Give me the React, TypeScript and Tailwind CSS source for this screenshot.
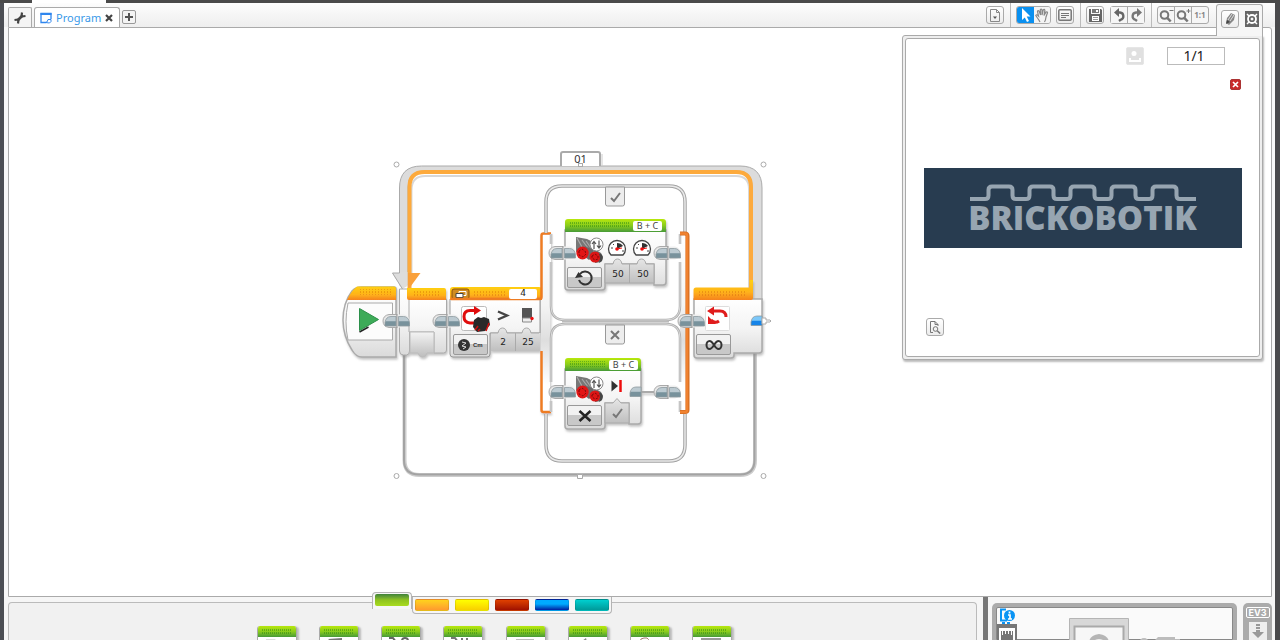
import React from 'react';
import clsx from 'clsx';

type Side = 'left' | 'right';

const toolButton =
  'flex h-[18px] w-[18px] items-center justify-center bg-linear-to-b from-white to-[#ececec] text-[#777]';
const singleTool = clsx(toolButton, 'rounded-[3px] border border-[#aaa]');

const categories = [
  { name: 'Flow', className: 'from-[#ffd21c] to-[#ff9a2e]' },
  { name: 'Sensor', className: 'from-[#ffff00] to-[#f8cf00]' },
  { name: 'Data', className: 'from-[#e04000] to-[#a01000]' },
  { name: 'Advanced', className: 'from-[#00aaff] from-40% to-[#0018a0]' },
  { name: 'My Blocks', className: 'from-[#00cfcf] to-[#009a9a]' },
];

const paletteBlocks = [
  'Medium Motor',
  'Large Motor',
  'Move Steering',
  'Move Tank',
  'Display',
  'Sound',
  'Brick Status Light',
  'Invert Motor',
];

const values = [
  { label: 'Mode threshold', value: '4', className: 'left-[174px] top-[144px] h-[10px] w-7 rounded-xs bg-white' },
  { label: 'Compare type', value: '2', className: 'left-[156px] top-[189px] h-4 w-6' },
  { label: 'Threshold', value: '25', className: 'left-[181px] top-[189px] h-4 w-6' },
  { label: 'Power left', value: '50', className: 'left-[271px] top-[121px] h-4 w-6' },
  { label: 'Power right', value: '50', className: 'left-[296px] top-[121px] h-4 w-6' },
];

const ports = [
  { label: 'Drive ports', className: 'left-[298px] top-[76px]' },
  { label: 'Stop ports', className: 'left-[274px] top-[215px]' },
];

const CategoryTabs: React.FC = () => (
  <div className="absolute inset-x-0 -top-[5px] flex items-start justify-center pr-[7px]">
    <div className="h-[17px] w-10 rounded-t-[4px] border border-b-0 border-[#b4b4b4] bg-[#f6f6f6] px-0.5 pt-px">
      <button
        aria-label="Action"
        className="block h-3 w-[34px] rounded-[2px] bg-linear-to-b from-[#3f8238] via-[#8fc31f] to-[#a9dc1f]"
      />
    </div>
    <div className="mt-[5px] flex h-[17px] gap-1.5 rounded-b-[4px] border border-t-0 border-[#b4b4b4] bg-[#f6f6f6] px-0.5 pt-0.5">
      {categories.map((category) => (
        <button
          key={category.name}
          aria-label={category.name}
          className={clsx('h-3 w-[34px] rounded-[2px] border border-black/10 bg-linear-to-b', category.className)}
        />
      ))}
    </div>
  </div>
);

const paletteIcons = [
  <path d="M8 3h9l3 4H8z" fill="#ddd" />,
  <path d="M8 3l14-1v2l-6 3h-3z" fill="#777" />,
  <path d="M7 2h4l3 4M20 5a3 3 0 0 1 6 0" fill="none" stroke="#666" strokeWidth="2" />,
  <path d="M7 2h4l3 4M18 2v4M23 2v4" fill="none" stroke="#777" strokeWidth="2" />,
  <path d="M9 3h18v4H9z" fill="#bbb" />,
  <path d="M13 5l4-3 1 4" fill="#888" />,
  <path d="M9 6q0-4 4-4h3q2 1 2 4" fill="none" stroke="#a87a6e" />,
  <path d="M9 6V3h18v4" fill="none" stroke="#999" strokeWidth="2" />,
];

const Palette: React.FC = () => (
  <div className="relative flex min-w-0 flex-1 flex-col pr-[6px] pt-[5px]">
    <div className="flex flex-1 justify-center rounded-t-[4px] border border-b-0 border-[#bbb] bg-[#f1f1f1] pl-1 pt-[23px]">
      <div className="flex w-[476px] justify-between">
        {paletteBlocks.map((name, i) => (
          <button
            key={name}
            aria-label={name}
            className="h-10 w-10 overflow-hidden rounded-t-[3px] border-x border-[#aaa] bg-white shadow-[2px_1px_2px_#bbb]"
          >
            <svg className="block h-full w-full" viewBox="0 0 38 40">
              <rect width="38" height="11" fill="url(#green)" />
              <rect x="4" y="3" width="30" height="5" fill="url(#greenStuds)" />
              <g transform="translate(0 10)">{paletteIcons[i]}</g>
            </svg>
          </button>
        ))}
      </div>
    </div>
    <CategoryTabs />
  </div>
);

const HardwarePanel: React.FC = () => (
  <div className="flex w-[289px] gap-1.5 border-l-[5px] border-[#777] pl-1 pt-1.5">
    <div className="flex w-[245px] rounded-t-[5px] bg-[#ababab] px-1 pt-1">
      <div className="flex flex-1 rounded-t-[2px] border border-[#888] bg-[#fafafa]">
        <div className="flex w-5 flex-col">
          <button aria-label="Brick information" className="flex h-5 items-center justify-center">
            <svg width="16" height="16" viewBox="0 0 16 16">
              <path d="M7 1.500H2v11h6" fill="none" stroke="#0a94f4" strokeWidth="2" />
              <path d="M3 15h3m2 0h3" stroke="#0a94f4" strokeWidth="2" />
              <circle cx="10.500" cy="7.500" r="5.500" fill="#0a94f4" />
              <path d="M10.500 3.500v2M9 7h2v4M9 11h4" fill="none" stroke="#fff" strokeWidth="1.700" />
            </svg>
          </button>
          <button aria-label="Port view" className="flex h-6 justify-center bg-[#777] pt-1">
            <svg width="16" height="18" viewBox="0 0 16 18">
              <path d="M0 0h16v18H0z" fill="#fff" />
              <path d="M2 3h1v4h1V3h2v3h1V3h2v3h1V3h2v4h1V3h1v15H2z" fill="#777" />
            </svg>
          </button>
        </div>
        <svg className="mt-[10px] ml-[52px]" width="120" height="30" viewBox="0 0 120 30">
          <path d="M.500.500h59V30H.500z" fill="#d8d8d8" stroke="#b5b5b5" />
          <path d="M5.500 8.500h49V30h-49z" fill="#f7f7f7" stroke="#aaa" strokeWidth="2" />
          <path d="M20 24q1-7 10-8 9 1 10 8z" fill="#b5b5b5" />
          <path d="M23 24q7-6 14 0z" fill="#eee" />
          <circle cx="75" cy="25" r="5" fill="#bcbcbc" />
          <path d="M84 24l5-5h17v2h5v4H84z" fill="#bcbcbc" />
        </svg>
      </div>
    </div>
    <div className="flex w-[29px] flex-col items-center gap-1 rounded-t-[5px] bg-[#ababab] pt-1">
      <span className="rounded-[2px] border border-white px-0.5 font-[Inter] text-[9px] leading-[9px] font-bold text-white">
        EV3
      </span>
      <button aria-label="Download" className="flex h-6 w-[18px] justify-center bg-[#eee] pt-0.5 text-[#999]">
        <svg width="12" height="14" viewBox="0 0 12 14" fill="currentColor">
          <path d="M4 0h4v2H4zM4 3h4v2H4zM4 6h4v2h4l-6 6-6-6h4z" />
        </svg>
      </button>
    </div>
  </div>
);

const ProjectTabs: React.FC = () => (
  <div className="flex items-end pl-1">
    <button
      aria-label="Project properties"
      className="flex h-5 w-6 items-center justify-center rounded-t-[2px] border border-b-0 border-[#aaa] bg-[#f4f4f4] text-[#444]"
    >
      <svg width="14" height="14" viewBox="0 0 14 14" fill="none" stroke="currentColor">
        <path d="M4.500 9.500l5-5" strokeWidth="2.600" />
        <path d="M9 1.500L8.500 5.500l4-.500M1.500 9l4-.500-.500 4" strokeWidth="2.200" />
      </svg>
    </button>
    <div className="-mb-px ml-0.5 flex h-[21px] w-[86px] items-center rounded-t-[3px] border border-b-0 border-[#aaa] bg-white pl-[5px]">
      <button className="flex items-center gap-1 font-['Noto_Sans'] text-[11px] leading-4 text-[#3999e8]">
        <svg width="12" height="12" viewBox="0 0 12 12" fill="none" stroke="#2f86ee">
          <path d="M6 10.500H1V1.500h10V7" strokeWidth="1.300" />
          <path d="M.500 2h11" strokeWidth="2" />
          <path d="M5.500 10.500q2 0 2.500-3h3v2l-1.500 1.500z" />
        </svg>
        Program
      </button>
      <button aria-label="Close tab" className="ml-1 text-[#444]">
        <svg width="8" height="8" viewBox="0 0 8 8" stroke="currentColor" strokeWidth="2.200">
          <path d="M1 1l6 6M7 1L1 7" />
        </svg>
      </button>
    </div>
    <button
      aria-label="Add program"
      className="mb-[3px] ml-0.5 flex h-[14px] w-[14px] items-center justify-center rounded-[2px] border border-[#999] bg-[#f4f4f4] text-[#555]"
    >
      <svg width="10" height="10" viewBox="0 0 10 10" stroke="currentColor" strokeWidth="2">
        <path d="M5 1v8M1 5h8" />
      </svg>
    </button>
  </div>
);

const ZoomIcon: React.FC<{ plus?: boolean }> = ({ plus }) => (
  <svg width="15" height="15" viewBox="0 0 15 15" fill="none" stroke="#777">
    <circle cx="5.500" cy="7" r="3.800" strokeWidth="2" />
    <path d="M8.300 9.800l3.400 3.700" strokeWidth="2.500" />
    <path d={plus ? 'M10.500 3h4M12.500 1v4' : 'M10.500 2.500h4'} />
  </svg>
);

const Toolbar: React.FC = () => (
  <div className="flex h-full items-center pr-[66px]">
    <button aria-label="New comment page" className={singleTool}>
      <svg width="12" height="13" viewBox="0 0 12 13" fill="none" stroke="#888">
        <path d="M1.500.500h6l3 3v9h-9zM7.500.500v3h3" />
        <path d="M4 7.500h4L6 10z" fill="#555" stroke="none" />
      </svg>
    </button>
    <div className="ml-1.5 h-full w-px bg-[#bbb]" />
    <div className="ml-[5px] flex overflow-hidden rounded-[3px] border border-[#aaa]">
      <button aria-label="Select" className="flex h-4 w-[17px] items-center justify-center bg-[#0a90f0]">
        <svg width="10" height="14" viewBox="0 0 10 14" fill="#fff">
          <path d="M1 0l8.500 8.500H5.700L8 13l-2 1-2.200-4.500L1 12z" />
        </svg>
      </button>
      <button aria-label="Pan" className="flex h-4 w-4 items-center justify-center bg-[#f4f4f4] text-[#888]">
        <svg width="14" height="15" viewBox="0 0 14 15" fill="none" stroke="currentColor" strokeWidth="1.200">
          <path d="M5 14q-1-2-2.500-4L.800 7.500Q1.500 6 3 7.500L3.500 8 2.500 3.500q.500-1.500 1.700-.200L5.500 7 5.300 1.800q.700-1.500 1.700 0V7l1.200-5q1-1.200 1.700.200L9 7.500l2-3.500q1.200-.600 1.500.600L11 9q-.300 3-1.500 5" />
        </svg>
      </button>
    </div>
    <button aria-label="Comment" className={clsx(singleTool, 'ml-[5px]')}>
      <svg width="14" height="12" viewBox="0 0 14 12" fill="none" stroke="#777">
        <rect x=".800" y=".800" width="12.400" height="10.400" rx="1" strokeWidth="1.500" />
        <path d="M3 4.500h8M3 6.500h8M3 8.500h5" />
      </svg>
    </button>
    <div className="ml-1.5 h-full w-px bg-[#bbb]" />
    <button aria-label="Save" className={clsx(singleTool, 'ml-[5px]')}>
      <svg width="13" height="13" viewBox="0 0 13 13">
        <path d="M0 0h2v5h9V0h1l1 1v12H0z" fill="#666" />
        <path d="M3 0h7v4H3z" fill="#777" />
        <path d="M7 1h2v2H7zM3 7h7v5H3z" fill="#fff" />
        <path d="M4 8.500h5M4 10.500h5" stroke="#999" />
      </svg>
    </button>
    <div className="ml-1.5 flex rounded-[3px] border border-[#aaa]">
      <button aria-label="Undo" className="flex h-4 w-[17px] items-center justify-center border-r border-[#aaa] bg-[#f6f6f6]">
        <svg width="13" height="14" viewBox="0 0 13 14">
          <path d="M4 4.500h3a3.700 3.700 0 0 1 .500 7.300L6 13" fill="none" stroke="#666" strokeWidth="2.300" />
          <path d="M6 0v9L1 4.500z" fill="#666" />
        </svg>
      </button>
      <button aria-label="Redo" className="flex h-4 w-4 items-center justify-center bg-[#f6f6f6]">
        <svg width="13" height="14" viewBox="0 0 13 14">
          <path d="M9 4.500H6a3.700 3.700 0 0 0-.500 7.300L7 13" fill="none" stroke="#777" strokeWidth="2.300" />
          <path d="M7 0v9l5-4.500z" fill="#777" />
        </svg>
      </button>
    </div>
    <div className="ml-1.5 h-full w-px bg-[#bbb]" />
    <div className="ml-[5px] flex rounded-[3px] border border-[#aaa] bg-[#f6f6f6]">
      <button aria-label="Zoom out" className="flex h-4 w-[17px] items-center justify-center border-r border-[#aaa]">
        <ZoomIcon />
      </button>
      <button aria-label="Zoom in" className="flex h-4 w-[17px] items-center justify-center border-r border-[#aaa]">
        <ZoomIcon plus />
      </button>
      <button className="flex h-4 w-4 items-center justify-center font-['Noto_Sans'] text-[8px] leading-4 font-bold text-[#888]">
        1:1
      </button>
    </div>
  </div>
);

const ContentEditor: React.FC = () => (
  <aside className="absolute top-1 right-[17px] flex flex-col">
    <div className="z-10 -mb-px flex h-8 w-[47px] items-start gap-1.5 self-end rounded-t-[3px] border border-b-0 border-[#aaa] bg-[#f6f6f6] pt-[5px] pl-1">
      <button aria-label="Edit content" className={singleTool}>
        <svg width="14" height="14" viewBox="0 0 14 14">
          <path d="M3 11l1-5 4-5 4 2-1 5-5 5z" fill="#888" />
          <path d="M5 8l4-6M7 9l4-6" stroke="#ddd" />
          <path d="M3 12l1-4 3 2z" fill="#444" />
        </svg>
      </button>
      <button aria-label="Content settings" className="mt-px flex h-4 w-[14px] items-center justify-center bg-[#666]">
        <svg width="12" height="12" viewBox="0 0 12 12" fill="none" stroke="#fff">
          <circle cx="6" cy="6" r="4" strokeWidth="1.800" />
          <path d="M1 1l2 2M11 1L9 3M1 11l2-2M11 11L9 9" strokeWidth="1.500" />
          <circle cx="6" cy="6" r="1" fill="#fff" />
        </svg>
      </button>
    </div>
    <div className="w-[361px] rounded-[3px] rounded-tr-none border border-[#aaa] bg-[#eee] p-0.5 shadow-[1px_2px_2px_#bbb]">
      <div className="flex h-[319px] flex-col rounded-[3px] border border-[#aaa] bg-white">
        <div className="flex h-[50px] items-start justify-end gap-[23px] pt-2 pr-[34px]">
          <button
            aria-label="Add page"
            disabled
            className="flex h-[18px] w-[18px] items-center justify-center rounded-[2px] border border-[#e6e6e6] bg-[#e0e0e0]"
          >
            <svg width="14" height="14" viewBox="0 0 14 14" fill="#fff">
              <circle cx="6" cy="4.500" r="2.500" />
              <path d="M1 9h2v2h8V9h2v4H1z" />
            </svg>
          </button>
          <input
            aria-label="Page"
            defaultValue="1/1"
            className="h-[18px] w-[58px] border border-[#bbb] bg-white pr-1 pb-0.5 text-center font-['Noto_Sans'] text-[14px] leading-4 text-[#222]"
          />
        </div>
        <div className="flex flex-col items-center">
          <button
            aria-label="Remove content"
            className="mt-[-10px] mr-[18px] flex h-[11px] w-[11px] items-center justify-center self-end rounded-[2px] border border-[#a33] bg-[#c92a2a]"
          >
            <svg width="7" height="7" viewBox="0 0 7 7" stroke="#fff" strokeWidth="1.700">
              <path d="M1 1l5 5M6 1L1 6" />
            </svg>
          </button>
          <div className="mt-[78px] flex h-20 w-[318px] flex-col items-center bg-[#283c50] pt-4">
            <svg width="226" height="18" viewBox="0 0 226 18" fill="none" stroke="#97a5b1" strokeWidth="4">
              <path d="M0 15H15q3.500 0 3.500-3.500V6q0-3.500 3.500-3.500h17q3.500 0 3.500 3.500v5.500q0 3.500 3.500 3.500h10q3.500 0 3.500-3.500V6q0-3.500 3.500-3.500h17q3.500 0 3.500 3.500v5.500q0 3.500 3.500 3.500h10q3.500 0 3.500-3.500V6q0-3.500 3.500-3.500h17q3.500 0 3.500 3.500v5.500q0 3.500 3.500 3.500h10q3.500 0 3.500-3.500V6q0-3.500 3.500-3.500h17q3.500 0 3.500 3.500v5.500q0 3.500 3.500 3.500h10q3.500 0 3.500-3.500V6q0-3.500 3.500-3.500h17q3.500 0 3.500 3.500v5.500q0 3.500 3.500 3.500H226" />
            </svg>
            <span className="font-['Open_Sans'] text-[33px] leading-8 font-extrabold text-[#97a5b1]">BRICKOBOTIK</span>
          </div>
        </div>
        <button aria-label="Preview" className={clsx(singleTool, 'mt-auto mb-5 ml-5')}>
          <svg width="12" height="13" viewBox="0 0 12 13" fill="none" stroke="#777">
            <path d="M4 11.500H1.500v-11H6l3 3V5M6 .500v3h3" />
            <circle cx="6.500" cy="8" r="2.300" />
            <path d="M8.200 9.700l3 2.800" strokeWidth="1.500" />
          </svg>
        </button>
      </div>
    </div>
  </aside>
);

// One half of a sequence plug, x/y is the top left corner
const Plug: React.FC<{ x: number; y: number; side: Side; fill?: string }> = ({ x, y, side, fill = 'url(#plug)' }) => (
  <path
    transform={`translate(${x} ${y})`}
    d={side === 'left' ? 'M11 0H6Q1 0 0 6v3.500h11z' : 'M0 0h5q5 0 6 6v3.500H0z'}
    fill={fill}
    stroke="#8d9aa0"
    strokeWidth=".800"
    strokeLinejoin="round"
  />
);

const PlugPair: React.FC<{ x: number; y: number }> = ({ x, y }) => (
  <g>
    <path d={`M${x} ${y - 6.5}h-8q-6 1-6 6.500t6 6.500h8z`} fill="#e6e6e6" stroke="#aaa" />
    <path d={`M${x} ${y - 6.5}h7q5 1 6 6.500-1 5.500-6 6.500h-7z`} fill="#efefef" />
    <path d={`M${x} ${y - 7}v14`} stroke="#999" />
    <Plug x={x - 12} y={y - 4.5} side="left" />
    <Plug x={x + 1.5} y={y - 4.5} side="right" />
  </g>
);

const Header: React.FC<{ x: number; y: number; w: number; fill: string; studs: number }> = ({ x, y, w, fill, studs }) => (
  <g>
    <path d={`M${x} ${y + 13}v-10q0-3 3-3h${w - 6}q3 0 3 3v10z`} fill={fill} />
    <rect x={x + 4} y={y + 3} width={studs} height="6" fill="url(#greenStuds)" />
  </g>
);

const MotorIcon: React.FC = () => (
  <g>
    <path d="M0 0l11 2 6 3 2 9-5 3-6-5-8 3z" fill="#777" />
    <path d="M1 1l5 9M6 3l6 8M10 4l5 7" stroke="#aaa" strokeWidth="1.200" />
    <path d="M9 9l8 4 1 6-5 4-4-3z" fill="#6b6b6b" />
    <path d="M18 12l7 4 2 4-2 5-6 1z" fill="#666" />
    <ellipse cx="6.500" cy="16" rx="6.200" ry="6.500" fill="#e21818" />
    <ellipse cx="19" cy="20" rx="5.500" ry="5.500" fill="#dc1515" />
    <path d="M25 17q3 3 1 7l-3 2q2-5 0-9z" fill="#444" />
    <path d="M3 14l3-2 3 2 1 3-3 3-4-2zM16 19l3-2 3 2v3l-3 1-3-2z" fill="none" stroke="#7c0808" strokeDasharray="2 1.500" />
    <circle cx="20.500" cy="7.500" r="6.500" fill="#fff" stroke="#888" />
    <path d="M18 12V5M16 7l2-2.500L20 7M23 3.500v7M21 8.500l2 2.500 2-2.500" fill="none" stroke="#555" strokeWidth="1.200" />
  </g>
);

const Gauge: React.FC<{ x: number; y: number }> = ({ x, y }) => (
  <g transform={`translate(${x} ${y})`}>
    <path d="M-6 6a8.500 8.500 0 1 1 12 0z" fill="#fff" stroke="#444" strokeWidth="1.300" />
    <path d="M0-6q4 0 6 3L0 0z" fill="#333" />
    <path d="M-6-1h2M-4-5l1 1M5 2h2" stroke="#444" />
    <circle r="1.800" fill="#e11" />
    <path d="M0 0l5-1" stroke="#e11" />
  </g>
);

const LoopFrame: React.FC = () => (
  <g fill="none">
    <path d="M404.500 350V460q0 15 15 15H740q15 0 15-15V350" stroke="#ccc" strokeWidth="4" />
    <path d="M404 350V460q0 14.500 15 14.500H740q14.500 0 14.500-14.500V350" stroke="#a3a3a3" strokeWidth="2" />
    <path
      d="M399.500 275V188q0-22 22-22H740q22 0 22 22V300H752V186q0-15-14-15H424q-16 0-16 16V285h-8.500z"
      fill="#dcdcdc"
      stroke="#aaa"
    />
    <path d="M411.500 280V190q0-14 14-14H736q13 0 13 13v99" stroke="#d8d8d8" strokeWidth="2" />
    <path d="M409.500 297V187q0-15 15-15H736q15 0 15 15V297" stroke="#fdaa3c" strokeWidth="4" />
    <path d="M392 273h8v-1h7.500v14L402 289z" fill="#ddd" />
    <path d="M399.500 273H392.500l10 16" stroke="#aaa" />
    <path d="M408 273h12.500L408 290z" fill="#f9a03a" />
    <path d="M561 166V154q0-2 2-2h35q2 0 2 2v12" fill="#fff" stroke="#aaa" strokeWidth="2" />
    <path d="M602 154v12" stroke="#ccc" />
  </g>
);

const StartBlock: React.FC = () => (
  <g>
    <path d="M396 289v68H362q-6 0-10-7-9-14-9-30 0-17 9-29 4-4 9-4h33q2 0 2 2z" fill="url(#body)" stroke="#aaa" strokeWidth="1.500" />
    <path d="M347 300q4-9 10-13.500h37q2 0 2 2V300z" fill="url(#orange)" />
    <rect x="358" y="289" width="34" height="6" fill="url(#studs)" />
    <path d="M348 303h44.500v37H348q-4-18 0-37z" fill="#fcfcfc" stroke="#aaa" />
    <path d="M359.500 332l9-5" stroke="#222" strokeWidth="1.500" />
    <path d="M359.500 308.500l19 11-19 11z" fill="#3dab58" stroke="#2c8f48" />
  </g>
);

const LoopStart: React.FC = () => (
  <g>
    <path d="M399.500 289v62q0 4 4 4h3q3 0 3-4V289z" fill="url(#body)" stroke="#aaa" />
    <path d="M409 299h37.500v51q0 3-3 3H434V332H409z" fill="url(#body)" stroke="#aaa" />
    <path d="M407 288h37q2 0 2 2v10H409q-2 0-2-2z" fill="url(#orange)" />
    <rect x="413" y="291" width="26" height="6" fill="url(#studs)" />
    <path d="M410 332h24v21h-7q-1 4-4.500 4t-4.500-4h-8z" fill="url(#metal)" stroke="#bbb" />
  </g>
);

const SwitchBlock: React.FC = () => (
  <g>
    <path d="M450 299h90v34h-50v21q0 3-3 3h-34q-3 0-3-3z" fill="url(#body)" stroke="#999" />
    <path d="M541 235h10v26l-1 80v70h-9z" fill="url(#inset)" />
    <Header x={450} y={287} w={92} fill="url(#orange)" studs={0} />
    <rect x="472" y="291" width="34" height="6" fill="url(#studs)" />
    <rect x="452" y="289" width="17" height="10" rx="2" fill="#d08c20" stroke="#8a5310" />
    <path d="M459 291.500h7v4h-7z" fill="none" stroke="#fff" />
    <path d="M456 293.500h7v4h-7z" fill="#fff" stroke="#444" />
    <path d="M551 233.500h-7.500q-2 0-2 2V297q0 2-2 2H451M541.500 351v59q0 2 2 2H551" fill="none" stroke="#ee7c22" strokeWidth="2.500" />
    <rect x="461.500" y="306.500" width="25" height="24" rx="2" fill="#fff" stroke="#bbb" />
    <path d="M474 310.500h-4q-6 0-6 6t6 6.500h5" fill="none" stroke="#e01010" strokeWidth="3" />
    <path d="M474 306l7 4.500-7 4.500z" fill="#e01010" />
    <path d="M474 320l4-3 3 1 3-1 5 2 1 6-5 6-8 1-4-5z" fill="#2b2b2b" />
    <path d="M475 330l3-4M486 331l3-8M478 331l2-2" stroke="#d01010" strokeWidth="1.500" />
    <path d="M498 311.500l9 4-9 4" fill="none" stroke="#444" strokeWidth="2.400" />
    <path d="M522 308h10v14h-10z" fill="#555" />
    <path d="M522.500 318h9v4h-9z" fill="#eee" stroke="#888" />
    <circle cx="532" cy="318.500" r="1.700" fill="#e11" />
    <path d="M491 333h7q1-5 4.500-5t4.500 5h15q1-5 4.500-5t4.500 5h9v18h-49z" fill="url(#value)" />
    <path d="M515.500 333v18" stroke="#aaa" />
    <path d="M491 333h7q1-5 4.500-5t4.500 5h15q1-5 4.500-5t4.500 5h8" fill="none" stroke="#aaa" />
  </g>
);

const outerCase = 'M546 233V202q0-16 16-16H669q16 0 16 16v31M546 414v31q0 16 16 16H669q16 0 16-16V414';
const innerCase =
  'M551 262v44q0 14 14 14H666q14 0 14-14v-44M551 382V338q0-14 14-14H666q14 0 14 14v44M551 401v11M680 401v11M551 234v10M680 234v10';

const CaseFrames: React.FC = () => (
  <g fill="none">
    <path d="M680 233.500h6.500v178H680" fill="url(#inset)" />
    <path d={outerCase} stroke="#a3a3a3" strokeWidth="3.500" />
    <path d={outerCase} stroke="#e9e9e9" strokeWidth="1.500" />
    <path d={innerCase} stroke="#b0b0b0" strokeWidth="2.500" />
    <path d={innerCase} stroke="#dadada" strokeWidth="1" />
    <path d="M562 321.500H669" stroke="#bbb" strokeWidth="2" />
    <path d="M680 233.500h5q2.500 0 2.500 2.500V410q0 2-2.500 2H680" stroke="#d66d20" strokeWidth="4" />
    <path d="M680 233.500h5q2 0 2 2V410q0 2-2 2H680" stroke="#f08230" strokeWidth="2.500" />
  </g>
);

const DriveBlock: React.FC = () => (
  <g>
    <path d="M565 230h101v52q0 3-3 3h-9V264h-49v23q0 3-3 3h-34q-3 0-3-3z" fill="url(#body)" stroke="#aaa" strokeWidth="1.500" />
    <Header x={565} y={219} w={101} fill="url(#green)" studs={61} />
    <g transform="translate(576 237)"><MotorIcon /></g>
    <Gauge x={617} y={249} />
    <Gauge x={642} y={249} />
    <path d="M605 264h8q1-5 4.500-5t4.500 5h15q1-5 4.500-5t4.500 5h8v19h-49z" fill="url(#value)" stroke="#aaa" />
    <path d="M629.500 264v19" stroke="#aaa" />
  </g>
);

const StopBlock: React.FC = () => (
  <g>
    <path d="M641 392h20" stroke="#aaa" strokeWidth="2" />
    <path d="M565 369h76v52q0 3-3 3h-9V403h-24v23q0 3-3 3h-34q-3 0-3-3z" fill="url(#body)" stroke="#aaa" strokeWidth="1.500" />
    <Header x={565} y={358} w={76} fill="url(#green)" studs={37} />
    <g transform="translate(576 376)"><MotorIcon /></g>
    <path d="M611.500 380.500l6.500 5.500-6.500 5.500z" fill="#333" />
    <path d="M620.500 380v12" stroke="#e11" strokeWidth="2.500" />
    <path d="M605 403h8l4-4.500 4 4.500h8v20h-24z" fill="url(#value)" stroke="#aaa" />
    <path d="M613 414l3 3 6-8" fill="none" stroke="#777" strokeWidth="2" />
  </g>
);

const LoopEnd: React.FC = () => (
  <g>
    <path d="M694 299h68v51q0 3-3 3h-25v2q0 3-3 3h-34q-3 0-3-3z" fill="url(#body)" stroke="#aaa" strokeWidth="1.500" />
    <path d="M693.500 300v-10q0-2.500 2.500-2.500h53.500V280h3.500v18q0 2-2 2z" fill="url(#orange)" />
    <rect x="697" y="291" width="50" height="6" fill="url(#studs)" />
    <rect x="705.500" y="306.500" width="24" height="24" rx="1" fill="#fff" stroke="#ddd" />
    <path d="M714 311h6q6 0 6 6" fill="none" stroke="#e01c1c" strokeWidth="3" />
    <path d="M714 306.500v9l-7-4.500zM708 316l8 8h-8z" fill="#e01c1c" />
    <path d="M711 320q4 4 8 1" fill="none" stroke="#e01c1c" strokeWidth="3" />
  </g>
);

const CaseTag: React.FC<{ y: number; children: React.ReactNode }> = ({ y, children }) => (
  <g transform={`translate(605 ${y})`}>
    <path d="M.500 0H19.500v17q0 2-2 2H2.500q-2 0-2-2z" fill="#ededed" stroke="#999" />
    <g fill="none" stroke="#777" strokeWidth="2">{children}</g>
  </g>
);

const modeButton =
  'absolute flex h-[21px] w-[35px] items-center justify-center rounded-xs border border-[#999] bg-linear-to-b from-[#f2f2f2] from-50% to-[#c8c8c8] to-50% text-[#333]';

const ProgramDiagram: React.FC = () => (
  <div className="absolute top-[117px] left-[326px] h-[345px] w-[440px]">
    <svg className="block h-full w-full" viewBox="335 145 440 345">
      <defs>
        <linearGradient id="orange" x2="0" y2="1">
          <stop stopColor="#ffcf10" />
          <stop offset=".600" stopColor="#ffb31a" />
          <stop offset="1" stopColor="#f58220" />
        </linearGradient>
        <linearGradient id="green" x2="0" y2="1">
          <stop stopColor="#b8e80c" />
          <stop offset=".500" stopColor="#8acc1c" />
          <stop offset="1" stopColor="#479a38" />
        </linearGradient>
        <linearGradient id="body" x2="0" y2="1">
          <stop stopColor="#fff" />
          <stop offset=".500" stopColor="#f4f4f4" />
          <stop offset="1" stopColor="#dadada" />
        </linearGradient>
        <linearGradient id="inset" x2="0" y2="1">
          <stop stopColor="#fff" />
          <stop offset=".400" stopColor="#f4f4f4" />
          <stop offset=".600" stopColor="#dedede" />
          <stop offset=".850" stopColor="#fff" />
        </linearGradient>
        <linearGradient id="metal" x2="0" y2="1">
          <stop stopColor="#f4f4f4" />
          <stop offset="1" stopColor="#bdbdbd" />
        </linearGradient>
        <linearGradient id="value" x2="0" y2="1">
          <stop stopColor="#e6e6e6" />
          <stop offset="1" stopColor="#bfbfbf" />
        </linearGradient>
        <linearGradient id="plug" x2="0" y2="1">
          <stop offset=".450" stopColor="#bccad1" />
          <stop offset=".550" stopColor="#78929c" />
        </linearGradient>
        <linearGradient id="plugBlue" x2="0" y2="1">
          <stop offset=".450" stopColor="#7cc8fa" />
          <stop offset=".550" stopColor="#1684e8" />
        </linearGradient>
        <pattern id="studs" width="3" height="3" patternUnits="userSpaceOnUse">
          <path d="M0 0h1v2H0z" fill="#c05000" fillOpacity=".300" />
        </pattern>
        <pattern id="greenStuds" width="2" height="3" patternUnits="userSpaceOnUse">
          <path d="M0 0h1v2H0z" fill="#2c8a10" fillOpacity=".500" />
        </pattern>
        <filter id="shadow" x="-10%" y="-10%" width="120%" height="120%">
          <feDropShadow dx="1" dy="2" stdDeviation="1" floodColor="#888" floodOpacity=".500" />
        </filter>
      </defs>

      <LoopFrame />
      <g filter="url(#shadow)">
        <StartBlock />
        <LoopStart />
        <SwitchBlock />
        <LoopEnd />
      </g>
      <CaseFrames />
      <g filter="url(#shadow)">
        <DriveBlock />
        <StopBlock />
      </g>
      <CaseTag y={187}><path d="M6 11l3 3 6-8" /></CaseTag>
      <CaseTag y={325}><path d="M6 6l8 8M14 6l-8 8" /></CaseTag>

      <PlugPair x={397} y={321} />
      <PlugPair x={447} y={321} />
      <PlugPair x={563} y={253} />
      <PlugPair x={668} y={253} />
      <PlugPair x={563} y={392} />
      <PlugPair x={668} y={392} />
      <PlugPair x={692} y={321} />
      <Plug x={630} y={387} side="left" />
      <Plug x={751} y={316} side="left" fill="url(#plugBlue)" />
      <path d="M762 318h4v2h4l1 1-1 1h-4v2h-4z" fill="#fff" stroke="#aaa" />

      <g fill="#fff" stroke="#aaa">
        <circle cx="396.500" cy="164.500" r="2.500" />
        <circle cx="763.500" cy="164.500" r="2.500" />
        <circle cx="396.500" cy="476" r="2.500" />
        <circle cx="763.500" cy="476" r="2.500" />
        <path d="M577.500 474.500h5v4h-5z" />
      </g>
    </svg>

    <input
      aria-label="Loop name"
      defaultValue="01"
      className="absolute top-2 left-[228px] h-3 w-[35px] bg-transparent text-center font-['Noto_Sans'] text-[11px] leading-3 text-[#333]"
    />
    <div className="absolute top-[18px] left-[243px] h-1 w-[5px] border border-[#aaa] bg-white" />

    {values.map((field) => (
      <input
        key={field.label}
        aria-label={field.label}
        defaultValue={field.value}
        className={clsx("absolute text-center font-['DejaVu_Sans'] text-[9px] text-[#222]", field.className)}
      />
    ))}
    {ports.map((port) => (
      <button
        key={port.label}
        aria-label={port.label}
        className={clsx(
          "absolute h-[10px] w-[29px] rounded-xs bg-white font-['Noto_Sans'] text-[9px] leading-[10px] whitespace-nowrap text-[#444]",
          port.className,
        )}
      >
        B + C
      </button>
    ))}

    <button aria-label="Infrared distance mode" className={clsx(modeButton, 'top-[189px] left-[118px]')}>
      <svg width="30" height="14" viewBox="0 0 30 14">
        <circle cx="8" cy="7" r="6" fill="#333" />
        <path d="M6 4l4 1-4 3 4 1-3 2" fill="none" stroke="#ddd" />
        <text x="17" y="9" fontFamily="Liberation Sans" fontSize="6" fontWeight="700" fill="#333">Cm</text>
      </svg>
    </button>
    <button aria-label="Drive mode" className={clsx(modeButton, 'top-[122px] left-[232px]')}>
      <svg width="20" height="18" viewBox="0 0 20 18" fill="none" stroke="#333" strokeWidth="2">
        <path d="M5 5a6.500 6.500 0 1 1-1 6" />
        <path d="M0 9l3.500-6L8 8z" fill="#333" stroke="none" />
      </svg>
    </button>
    <button aria-label="Stop mode" className={clsx(modeButton, 'top-[260px] left-[232px]')}>
      <svg width="14" height="12" viewBox="0 0 14 12" stroke="#222" strokeWidth="2.500">
        <path d="M1.500 1l11 10M12.500 1l-11 10" />
      </svg>
    </button>
    <button aria-label="Unlimited mode" className={clsx(modeButton, 'top-[189px] left-[361px]')}>
      <svg width="18" height="12" viewBox="0 0 18 12" fill="none" stroke="#333" strokeWidth="2">
        <path d="M9 6Q6.500 2 4.500 2A3 4 0 0 0 4.500 10Q6.500 10 9 6T13.500 2A3 4 0 0 1 13.500 10Q11.500 10 9 6z" />
      </svg>
    </button>
  </div>
);

const App: React.FC = () => {
  return (
    <div className="relative flex h-screen flex-col overflow-hidden bg-[#f8f8f8]">
      <div className="flex h-[3px] shrink-0 bg-[#4a4a4a]">
        <div className="ml-8 w-[74px] bg-white" />
      </div>
      <div className="flex min-h-0 flex-1 flex-col border-r-[5px] border-l-4 border-r-[#4a4a4c] border-l-[#4c4e54]">
        <header className="flex h-6 shrink-0 justify-between bg-linear-to-b from-[#fdfdfd] to-[#eee]">
          <ProjectTabs />
          <Toolbar />
        </header>
        <main className="relative mr-[3px] ml-1 min-h-0 flex-1 overflow-hidden rounded-tr-[3px] border border-[#aaa] bg-white">
          <ProgramDiagram />
        </main>
        <footer className="relative flex h-[43px] shrink-0 bg-[#f6f6f6] pr-[3px] pl-1">
          <Palette />
          <HardwarePanel />
        </footer>
      </div>
      <ContentEditor />
    </div>
  );
};

export default App;
